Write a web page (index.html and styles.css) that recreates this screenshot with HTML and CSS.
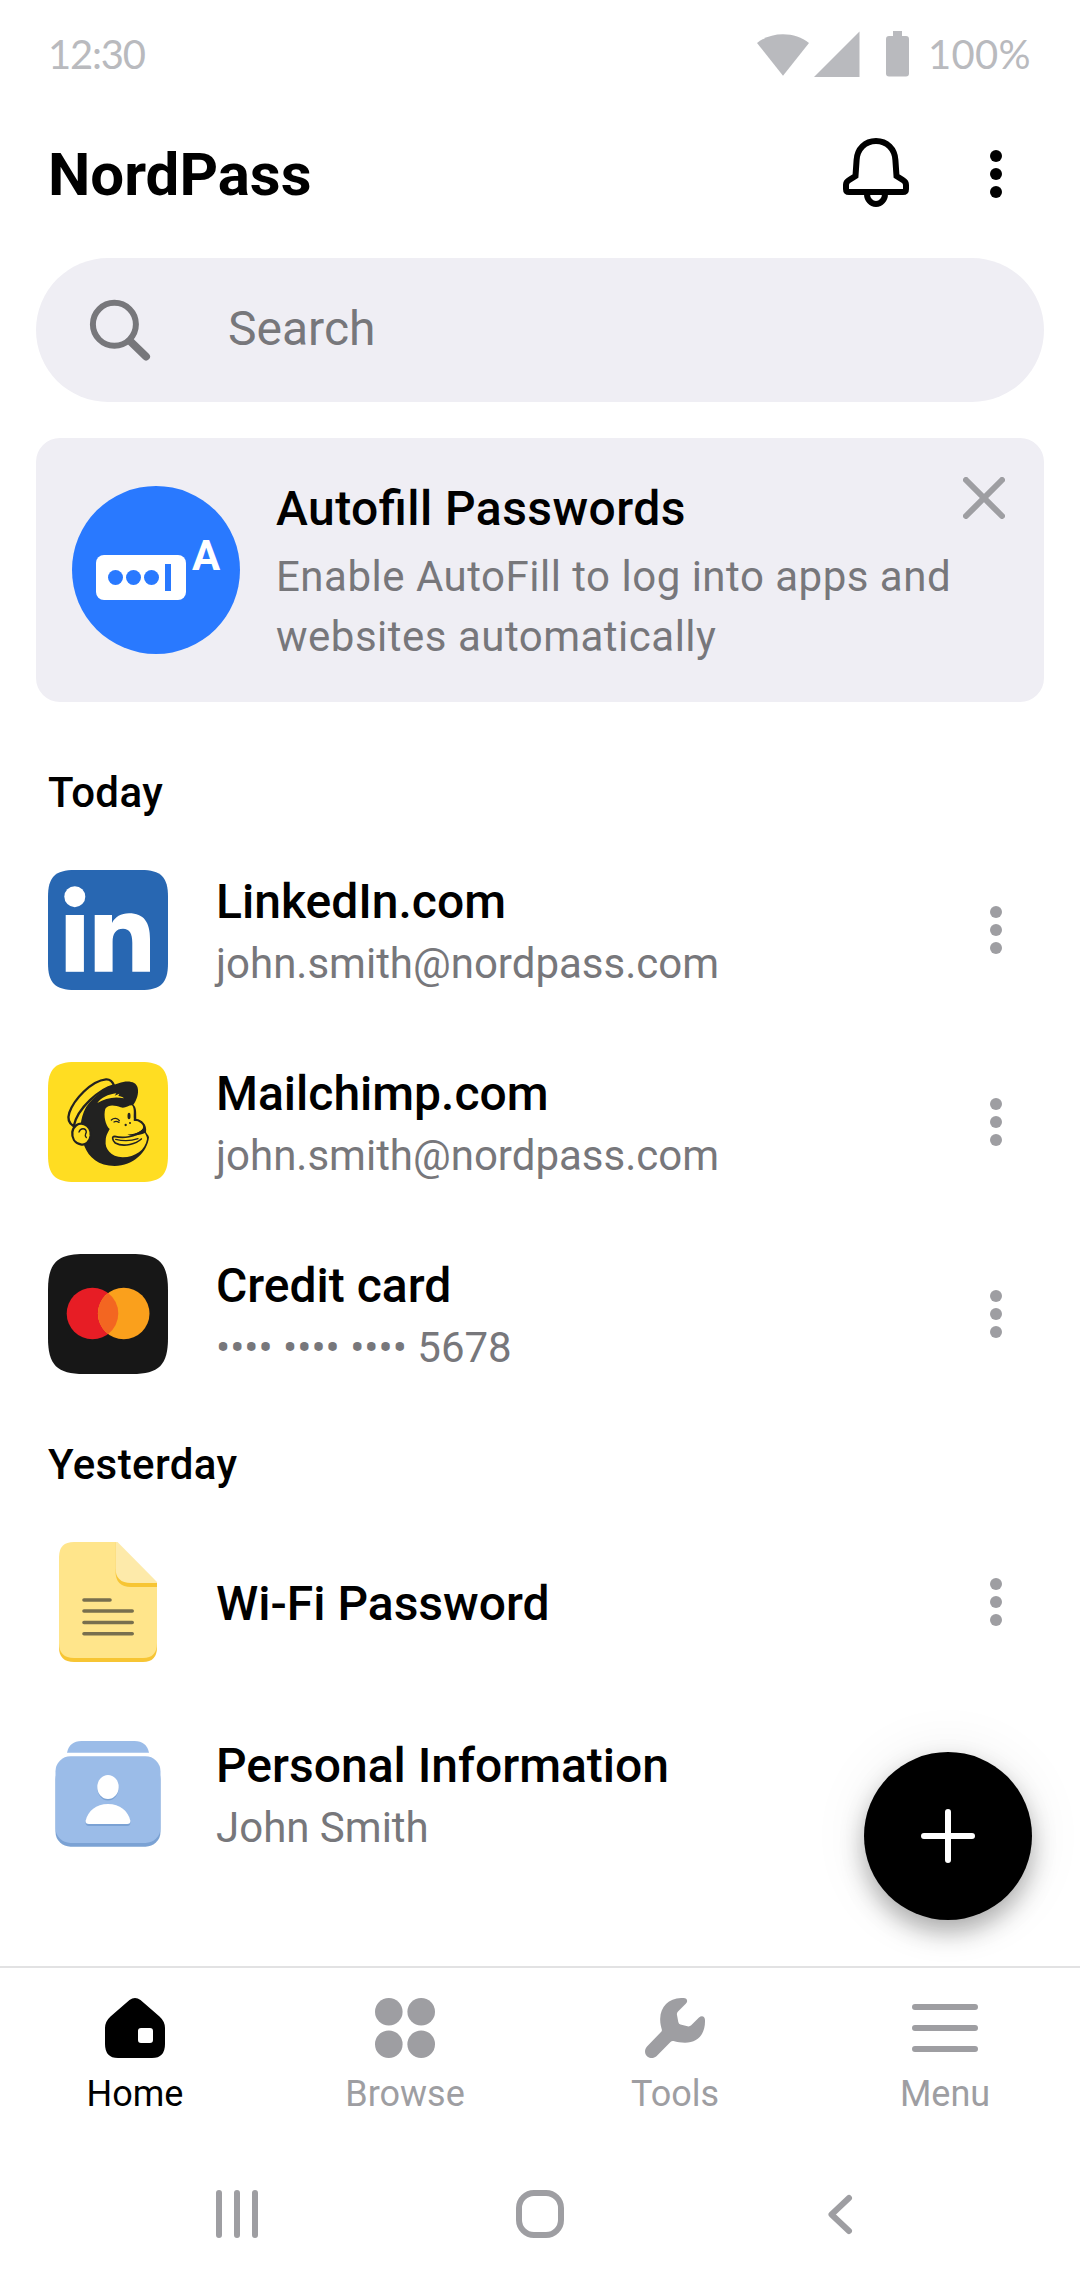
FILE: index.html
```html
<!DOCTYPE html>
<html lang="en">
<head>
<meta charset="utf-8">
<title>NordPass</title>
<link rel="stylesheet" href="styles.css">
</head>
<body>
<div class="screen">
  <header class="status">
    <span class="status-text status-time">12:30</span>
    <div class="status-right">
      <svg class="wifi" width="54" height="46" viewBox="0 0 54 46"><path d="M27 44.700 1 12C8 6.500 17 3.300 27 3.300S46 6.500 53 12Z"/></svg>
      <svg class="signal" width="46" height="46" viewBox="0 0 46 46"><path d="M0 46 45.500 .5V46Z"/></svg>
      <svg class="battery" width="23" height="46" viewBox="0 0 23 46"><path d="M7 0h9v5H20a3 3 0 0 1 3 3V42.500a3 3 0 0 1-3 3H3a3 3 0 0 1-3-3V8a3 3 0 0 1 3-3H7Z"/></svg>
      <span class="status-text status-charge">100%</span>
    </div>
  </header>

  <div class="titlebar">
    <h1 class="app-name">NordPass</h1>
    <div class="titlebar-actions">
      <svg width="72" height="72" viewBox="0 2 72 72" fill="none" stroke="#000" stroke-width="6"><path d="M36 5C25 5 17.200 13 16.600 24L15.500 40 8.800 44.300Q6 46 6 49V53Q6 56 9 56H63Q66 56 66 53V49Q66 46 63.200 44.300L56.500 40 55.400 24C54.800 13 47 5 36 5Z"/><path d="M27 58a9 10 0 0 0 18 0"/></svg>
      <svg class="dots dots-dark" width="12" height="48" viewBox="0 0 12 48"><circle cx="6" cy="6" r="6"/><circle cx="6" cy="24" r="6"/><circle cx="6" cy="42" r="6"/></svg>
    </div>
  </div>

  <div class="search">
    <svg width="62" height="62" viewBox="0 0 62 62" fill="none" stroke="#77777b" stroke-width="6"><circle cx="25.400" cy="25.300" r="21.500"/><path d="M41 42 57 57.500" stroke-width="8" stroke-linecap="round"/></svg>
    <span class="search-hint">Search</span>
  </div>

  <section class="banner">
    <svg class="banner-icon" width="168" height="168" viewBox="0 0 168 168"><circle cx="84" cy="84" r="84" fill="#2979ff"/><rect x="24" y="69" width="90" height="45" rx="8" fill="#fff"/><g fill="#2979ff"><circle cx="43.500" cy="91.500" r="7.500"/><circle cx="61.500" cy="91.500" r="7.500"/><circle cx="79.500" cy="91.500" r="7.500"/><rect x="93" y="78" width="6" height="27"/></g><text class="banner-letter" x="134" y="84" text-anchor="middle">A</text></svg>
    <div class="banner-copy">
      <h2 class="banner-title">Autofill Passwords</h2>
      <p class="banner-text">Enable AutoFill to log into apps and<br>websites automatically</p>
    </div>
    <svg class="close" width="42" height="42" viewBox="0 0 42 42"><path d="M3 3 39 39M39 3 3 39"/></svg>
  </section>

  <main class="list">
    <h3 class="group">Today</h3>
    <div class="row">
      <svg class="tile" viewBox="0 0 120 120"><path d="M0 27C0 7 7 0 27 0H93C113 0 120 7 120 27V93C120 113 113 120 93 120H27C7 120 0 113 0 93Z" fill="#2867b2"/><g fill="#fff"><circle cx="26.800" cy="26.700" r="10.500"/><rect x="17.700" y="45" width="18.200" height="56.800"/><path d="M46.700 45H64V53C67 47 73 43.300 81 43.300 96 43.300 102 52.500 102 69V101.800H84.300V73C84.300 63.500 81.500 58.800 75 58.800 68 58.800 64.600 63.500 64.600 72V101.800H46.700Z"/></g></svg>
      <div class="row-text"><div class="row-title">LinkedIn.com</div><div class="row-sub">john.smith@nordpass.com</div></div>
      <svg class="dots" width="12" height="48" viewBox="0 0 12 48"><circle cx="6" cy="6" r="6"/><circle cx="6" cy="24" r="6"/><circle cx="6" cy="42" r="6"/></svg>
    </div>
    <div class="row">
      <svg class="tile" viewBox="24 66 360 360">
        <path d="M24 147C24 87 45 66 105 66H303C363 66 384 87 384 147V345C384 405 363 426 303 426H105C45 426 24 405 24 345Z" fill="#ffdd22"/>
        <path fill="#222221" d="M133 318C146 352 176 378 224 378 280 378 322 336 327 292 325 284 320 282 318 277 322 254 305 238 289 237 288 220 291 204 280 194 290 180 297 160 293 143 288 124 262 120 236 130 208 136 160 168 138 202 128 220 124 238 122 254Z"/>
        <path fill="#ffdd22" d="M196 206C206 192 226 196 242 202 256 206 264 196 276 196 286 208 278 228 283 243 300 240 315 250 312 262 308 276 284 283 262 284 284 290 300 284 315 279 317 286 322 290 321 298 316 330 286 352 248 352 212 350 194 326 197 302 198 284 204 278 209 267 196 256 190 226 196 206Z"/>
        <g fill="none" stroke="#222221" stroke-width="5" stroke-linecap="round" stroke-linejoin="round">
          <path fill="#ffdd22" stroke-width="7" d="M101 259C86 250 82 236 88 218 102 178 154 122 198 118 212 117 218 126 222 136 180 146 112 204 101 259Z"/>
          <path fill="#ffdd22" stroke-width="7" d="M131 252C146 258 154 272 152 288 149 308 136 316 122 313 104 309 95 294 97 276 100 258 114 248 131 252Z"/>
          <path stroke-width="4" d="M117 276C122 262 138 264 139 276 137 284 132 284 139 293"/>
          <path d="M310 269C286 292 248 296 224 289 214 289 218 302 226 309 252 324 290 310 304 297"/>
          <path stroke-width="4" d="M227 298C252 304 276 302 294 296"/>
          <path stroke-width="4" d="M214 240C222 233 232 234 238 242M222 246C228 242 232 244 237 247"/>
          <path d="M283 240C298 240 316 252 311 266 307 275 298 280 288 283"/>
        </g>
        <g fill="#222221"><ellipse cx="267" cy="228" rx="4.500" ry="10"/><circle cx="257" cy="255" r="3.500"/><circle cx="270" cy="249" r="3"/></g>
        <path fill="#ffdd22" d="M172 189C184 173 204 163 229 160L224 167 238 161 235 168C242 169 247 170 252 175 222 168 196 175 172 189Z"/>
      </svg>
      <div class="row-text"><div class="row-title">Mailchimp.com</div><div class="row-sub">john.smith@nordpass.com</div></div>
      <svg class="dots" width="12" height="48" viewBox="0 0 12 48"><circle cx="6" cy="6" r="6"/><circle cx="6" cy="24" r="6"/><circle cx="6" cy="42" r="6"/></svg>
    </div>
    <div class="row">
      <svg class="tile" viewBox="0 0 120 120"><path d="M0 36C0 9 9 0 36 0H84C111 0 120 9 120 36V84C120 111 111 120 84 120H36C9 120 0 111 0 84Z" fill="#171717"/><circle cx="44.500" cy="59.500" r="25.800" fill="#e71d25"/><circle cx="75.700" cy="59.500" r="25.800" fill="#faa01c"/><path d="M60.100 38.950A25.800 25.800 0 0 1 60.100 80.050 25.800 25.800 0 0 1 60.100 38.950Z" fill="#f36621"/></svg>
      <div class="row-text"><div class="row-title">Credit card</div><div class="row-sub">•••• •••• •••• 5678</div></div>
      <svg class="dots" width="12" height="48" viewBox="0 0 12 48"><circle cx="6" cy="6" r="6"/><circle cx="6" cy="24" r="6"/><circle cx="6" cy="42" r="6"/></svg>
    </div>

    <h3 class="group">Yesterday</h3>
    <div class="row">
      <svg class="tile" viewBox="0 0 120 120"><path d="M11 60H109V105Q109 120 95 120H26Q11 120 11 105Z" fill="#f7c534"/><path d="M26 0H68L109 41V101Q109 116 95 116H26Q11 116 11 101V15Q11 0 26 0Z" fill="#ffe58b"/><path d="M67.500 0 109 41V45H83Q67.500 45 67.500 29Z" fill="#f7c534"/><path d="M67.500 0H69.500L109 40V41H83Q67.500 41 67.500 26Z" fill="#fdeaaa"/><path d="M36 58H62M36 69H84.200M36 80.500H84.200M36 91.700H84.200" stroke="#786f4e" stroke-width="3.600" stroke-linecap="round"/></svg>
      <div class="row-text"><div class="row-title">Wi-Fi Password</div></div>
      <svg class="dots" width="12" height="48" viewBox="0 0 12 48"><circle cx="6" cy="6" r="6"/><circle cx="6" cy="24" r="6"/><circle cx="6" cy="42" r="6"/></svg>
    </div>
    <div class="row">
      <svg class="tile" viewBox="0 0 120 120"><path d="M19 18.700Q21.500 7 33.500 7H86.500Q98.500 7 101 18.700Z" fill="#9bbce8"/><rect x="7.500" y="30" width="105" height="82.700" rx="15" fill="#7ba2d4"/><rect x="7.500" y="22.300" width="105" height="86.700" rx="15" fill="#9bbce8"/><g fill="#7ba2d4"><ellipse cx="60" cy="54.500" rx="10.500" ry="12"/><path d="M60 72C48 72 40 79 37.700 88Q37.200 92 41 92H79Q82.800 92 82.300 88C80 79 72 72 60 72Z"/></g><g fill="#fff"><ellipse cx="60" cy="53" rx="10.700" ry="12"/><path d="M60 70C48 70 40 77 37.700 86.500Q37.200 90 41 90H79Q82.800 90 82.300 86.500C80 77 72 70 60 70Z"/></g></svg>
      <div class="row-text"><div class="row-title">Personal Information</div><div class="row-sub">John Smith</div></div>
    </div>
    <button class="fab" aria-label="Add item"><svg width="54" height="54" viewBox="0 0 54 54"><path d="M27 3V51M3 27H51"/></svg></button>
  </main>

  <nav class="tabs">
    <div class="tab tab-active"><svg width="66" height="60" viewBox="-3 0 66 60"><path fill-rule="evenodd" d="M24.500 2Q30-2 35.500 2L54.500 18.500Q60 23.500 60 30V46Q60 60 47 60H13Q0 60 0 46V30Q0 23.500 5.500 18.500ZM36 30Q33 30 33 33V42Q33 45 36 45H45Q48 45 48 42V33Q48 30 45 30Z"/></svg><span>Home</span></div>
    <div class="tab"><svg width="66" height="60" viewBox="-3 0 66 60"><circle cx="13.800" cy="13.800" r="13.800"/><circle cx="46.200" cy="13.800" r="13.800"/><circle cx="13.800" cy="46.200" r="13.800"/><circle cx="46.200" cy="46.200" r="13.800"/></svg><span>Browse</span></div>
    <div class="tab"><svg width="66" height="60" viewBox="-3 0 66 60"><path d="M38.500 0C42 0 43.300 3 41 5.500L33 13.500Q31.500 15 32 17L33.300 24Q33.700 26 35.500 26.600L42.500 28.300Q44.700 28.800 46.200 27.300L54 19.500C56.500 17 60 18 60 22 60.500 37 52 44.700 40 44.700 36 44.700 32 44 28.500 43.100Q26.800 42.800 25.500 44L11.700 58C8.500 61 4 60.500 1.800 58 -.5 55.500-.7 51.500 2 48.500L16 34Q17.200 33 16.800 31.500C16 28 15 25 15.200 20.500 15.500 8 24.500-.5 38.500 0Z"/></svg><span>Tools</span></div>
    <div class="tab"><svg width="66" height="60" viewBox="-3 0 66 60"><path d="M0 9H60M0 30H60M0 51H60" stroke="#9e9ea2" stroke-width="6" stroke-linecap="round"/></svg><span>Menu</span></div>
  </nav>

  <footer class="system">
    <svg width="48" height="48" viewBox="0 0 48 48"><path d="M6 3V45M24 3V45M42 3V45"/></svg>
    <svg width="48" height="48" viewBox="0 0 48 48"><rect x="3" y="3" width="42" height="42" rx="15"/></svg>
    <svg width="48" height="48" viewBox="0 0 48 48"><path d="M30 8 12.500 24.500 30 41"/></svg>
  </footer>
</div>
</body>
</html>
```
FILE: styles.css
```css
* { box-sizing: border-box; margin: 0; padding: 0; }
body { width: 1080px; background: #fff; font-family: Roboto, "Liberation Sans", sans-serif; color: #000; }
svg { display: block; flex: none; }
.screen { width: 1080px; height: 2280px; display: flex; flex-direction: column; overflow: hidden; }

.status { height: 108px; padding: 0 48px; display: flex; justify-content: space-between; align-items: center; fill: #b9babe; }
.status-text { font-family: Lato, Roboto, sans-serif; font-size: 40px; line-height: 48px; color: #b9babe; white-space: nowrap; }
.status-time { letter-spacing: -1.2px; }
.status-right { display: flex; align-items: center; }
.signal { margin-left: 4px; }
.battery { margin-left: 26px; }
.status-charge { width: 104px; margin-left: 19px; letter-spacing: .3px; }

.titlebar { height: 132px; padding: 0 78px 0 48px; display: flex; justify-content: space-between; align-items: center; }
.app-name { padding-top: 2px; font-size: 60px; line-height: 72px; font-weight: 700; }
.titlebar-actions { display: flex; align-items: center; gap: 78px; }
.dots { fill: #9e9ea2; }
.dots-dark { fill: #000; }

.search { height: 144px; margin: 18px 36px 0; padding-left: 53px; display: flex; align-items: center; gap: 77px; border-radius: 72px; background: #efeef4; }
.search-hint { padding-bottom: 2px; font-size: 48px; line-height: 60px; color: #77777b; }

.banner { height: 264px; margin: 36px 36px 0; padding: 0 39px 0 36px; display: flex; align-items: center; border-radius: 24px; background: #efeef4; }
.banner-letter { font: 700 42px Roboto, sans-serif; fill: #fff; }
.banner-copy { flex: 1; padding-left: 36px; }
.banner-title { font-size: 48px; line-height: 72px; font-weight: 500; letter-spacing: .45px; font-feature-settings: "liga" 1; }
.banner-text { margin-top: 2px; font-size: 42px; line-height: 60px; letter-spacing: .5px; color: #77777b; white-space: nowrap; }
.close { align-self: flex-start; margin-top: 39px; fill: none; stroke: #9e9ea2; stroke-width: 6; stroke-linecap: round; }

.list { position: relative; margin-top: 36px; height: 1228px; }
.group { height: 96px; padding: 25px 48px 0; font-size: 42px; line-height: 60px; font-weight: 500; letter-spacing: .4px; }
.row { height: 192px; padding: 0 78px 0 48px; display: flex; align-items: center; }
.tile { width: 120px; height: 120px; }
.row-text { flex: 1; padding: 3px 0 0 48px; }
.row-title { font-size: 48px; line-height: 66px; font-weight: 500; }
.row-sub { margin-top: -1px; font-size: 42px; line-height: 60px; color: #77777b; }
.fab { position: absolute; right: 48px; bottom: 46px; width: 168px; height: 168px; display: flex; align-items: center; justify-content: center; border: 0; border-radius: 50%; background: #000; box-shadow: 0 12px 24px rgba(0,0,0,.3), 0 0 60px rgba(0,0,0,.07); }
.fab path { stroke: #fff; stroke-width: 6; stroke-linecap: round; }

.tabs { height: 194px; display: grid; grid-template-columns: repeat(4, 1fr); border-top: 2px solid #e2e2e3; }
.tab { padding-top: 30px; display: flex; flex-direction: column; align-items: center; gap: 12px; font-size: 36px; line-height: 48px; color: #9e9ea2; fill: #9e9ea2; }
.tab-active { color: #000; fill: #000; }

.system { flex: 1; padding: 30px 213px 0; display: flex; justify-content: space-between; align-items: flex-start; fill: none; stroke: #9e9ea2; stroke-width: 6; stroke-linecap: round; stroke-linejoin: round; }
```
